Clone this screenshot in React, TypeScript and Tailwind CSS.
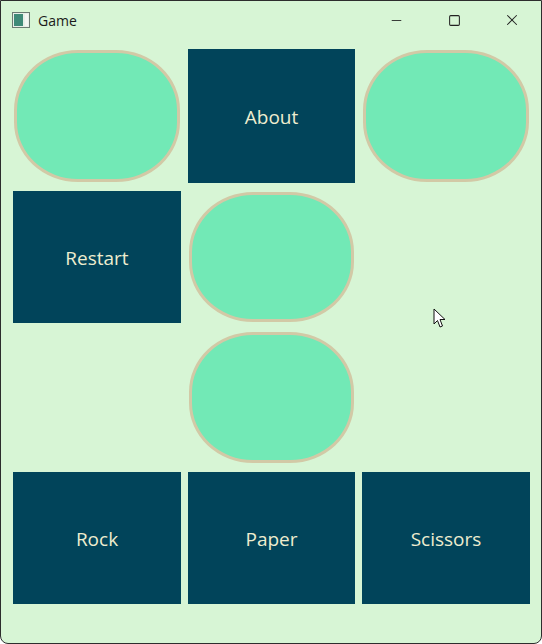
import { Minus, Square, X } from 'lucide-react';

type Cell = { kind: 'button'; label: string } | { kind: 'oval' } | { kind: 'empty' };

const cells: Cell[] = [
  { kind: 'oval' },
  { kind: 'button', label: 'About' },
  { kind: 'oval' },
  { kind: 'button', label: 'Restart' },
  { kind: 'oval' },
  { kind: 'empty' },
  { kind: 'empty' },
  { kind: 'oval' },
  { kind: 'empty' },
  { kind: 'button', label: 'Rock' },
  { kind: 'button', label: 'Paper' },
  { kind: 'button', label: 'Scissors' },
];

function AppIcon() {
  return (
    <svg width="18" height="16" viewBox="0 0 18 16" className="shrink-0">
      <rect x="0.5" y="0.5" width="17" height="15" fill="#e8efe8" stroke="#6b7a72" />
      <rect x="2" y="2" width="9" height="12" fill="#3f8a78" />
      <rect x="13" y="2" width="3" height="12" fill="#f3f5f3" />
    </svg>
  );
}

function Cursor() {
  return (
    <svg width="14" height="21" viewBox="0 0 14 21" className="absolute left-[432px] top-[307px]">
      <path d="M1 1 L1 16 L4.5 12.5 L7 19 L9.5 18 L7 11.5 L12 11.5 Z" fill="#fff" stroke="#111" strokeWidth="1" strokeLinejoin="round" />
    </svg>
  );
}

export default function App() {
  return (
    <div
      className="relative w-[542px] h-[644px] bg-[#d7f5d5] border border-[#2d2d2d] rounded-b-lg overflow-hidden"
      style={{ fontFamily: '"Open Sans", "Noto Sans", sans-serif' }}
    >
      {/* title bar */}
      <div className="flex items-center h-[38px] pl-[11px]">
        <AppIcon />
        <span className="ml-[8px] text-[14px] text-[#1a1a1a]">Game</span>
        <div className="ml-auto flex h-full">
          <div className="w-[58px] flex items-center justify-center">
            <Minus className="w-[15px] h-[15px] text-[#222]" strokeWidth={1.4} />
          </div>
          <div className="w-[58px] flex items-center justify-center">
            <Square className="w-[13px] h-[13px] text-[#222]" strokeWidth={1.9} />
          </div>
          <div className="w-[58px] flex items-center justify-center">
            <X className="w-[18px] h-[18px] text-[#222]" strokeWidth={1.4} />
          </div>
        </div>
      </div>

      {/* board */}
      <div className="grid grid-cols-[168px_167px_168px] grid-rows-[134px_132px_133px_132px] gap-x-[7px] gap-y-[8px] pl-[12px] pt-[10px]">
        {cells.map((cell, i) => {
          if (cell.kind === 'button') {
            return (
              <button
                key={i}
                className="bg-[#01445a] text-[#eeedcf] text-[19px] flex items-center justify-center pt-[2px]"
              >
                {cell.label}
              </button>
            );
          }
          if (cell.kind === 'oval') {
            return (
              <div key={i} className="p-px">
                <div className="w-full h-full bg-[#72e9b6] border-[3px] border-[#d2c9a6] rounded-[64px/60px]" />
              </div>
            );
          }
          return <div key={i} />;
        })}
      </div>

      <Cursor />
    </div>
  );
}
